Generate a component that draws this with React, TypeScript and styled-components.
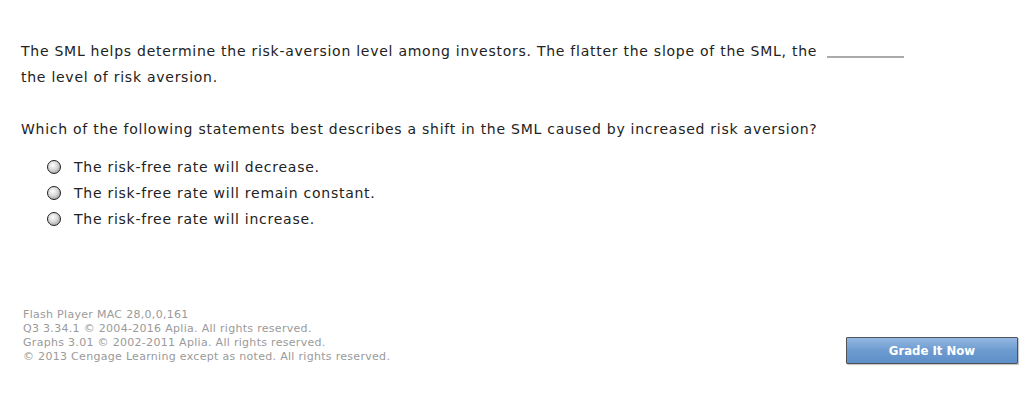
import React from 'react';
import styled, { createGlobalStyle } from 'styled-components';

const GlobalStyle = createGlobalStyle`
  html, body {
    margin: 0;
    padding: 0;
    background: #ffffff;
  }
`;

const Page = styled.div`
  width: 1024px;
  height: 407px;
  box-sizing: border-box;
  padding: 38px 0 0 21px;
  font-family: 'DejaVu Sans', Verdana, sans-serif;
  color: #222;
  display: flex;
  flex-direction: column;
`;

const Para = styled.p`
  margin: 0;
  font-size: 14px;
  letter-spacing: 0.74px;
  line-height: 26px;
  width: 960px;
`;

const Blank = styled.span`
  display: inline-block;
  width: 77px;
  height: 2px;
  background: #aaaaaa;
  margin-left: 10px;
  vertical-align: -2px;
`;

const Question = styled(Para)`
  margin-top: 26px;
`;

const Options = styled.div`
  display: flex;
  flex-direction: column;
  margin: 12px 0 0 26px;
`;

const Option = styled.label`
  display: flex;
  align-items: center;
  height: 26px;
  font-size: 14px;
  letter-spacing: 0.74px;
  gap: 13px;
`;

const Radio = styled.span`
  width: 12px;
  height: 12px;
  border-radius: 50%;
  border: 1.5px solid #1f1f1f;
  background: radial-gradient(circle at 40% 35%, #ffffff 0%, #d8d8d8 45%, #888888 100%);
`;

const Bottom = styled.div`
  margin-top: auto;
  display: flex;
  justify-content: space-between;
  align-items: flex-end;
  padding: 0 6px 43px 2px;
`;

const Credits = styled.div`
  font-size: 11px;
  letter-spacing: 0.3px;
  line-height: 14px;
  color: #9a9a9a;
`;

const GradeButton = styled.button`
  width: 172px;
  height: 27px;
  border: 1px solid #4f5358;
  border-radius: 1px;
  background: linear-gradient(#94b8e2, #6d9bd0 50%, #5e8fc8);
  color: #ffffff;
  font-family: 'DejaVu Sans Condensed', 'Liberation Sans', sans-serif;
  font-weight: bold;
  font-size: 13px;
  box-shadow: 1px 1px 1px rgba(0, 0, 0, 0.25);
  cursor: pointer;
`;

const options = [
  'The risk-free rate will decrease.',
  'The risk-free rate will remain constant.',
  'The risk-free rate will increase.',
];

const credits = [
  'Flash Player MAC 28,0,0,161',
  'Q3 3.34.1 \u00a9 2004-2016 Aplia. All rights reserved.',
  'Graphs 3.01 \u00a9 2002-2011 Aplia. All rights reserved.',
  '\u00a9 2013 Cengage Learning except as noted. All rights reserved.',
];

export default function App() {
  return (
    <>
      <GlobalStyle />
      <Page>
        <Para>
          The SML helps determine the risk-aversion level among investors. The flatter the slope of the SML, the
          <Blank />
          <br />
          the level of risk aversion.
        </Para>
        <Question>
          Which of the following statements best describes a shift in the SML caused by increased risk aversion?
        </Question>
        <Options>
          {options.map((o) => (
            <Option key={o}>
              <Radio />
              {o}
            </Option>
          ))}
        </Options>
        <Bottom>
          <Credits>
            {credits.map((c) => (
              <div key={c}>{c}</div>
            ))}
          </Credits>
          <GradeButton>Grade It Now</GradeButton>
        </Bottom>
      </Page>
    </>
  );
}
